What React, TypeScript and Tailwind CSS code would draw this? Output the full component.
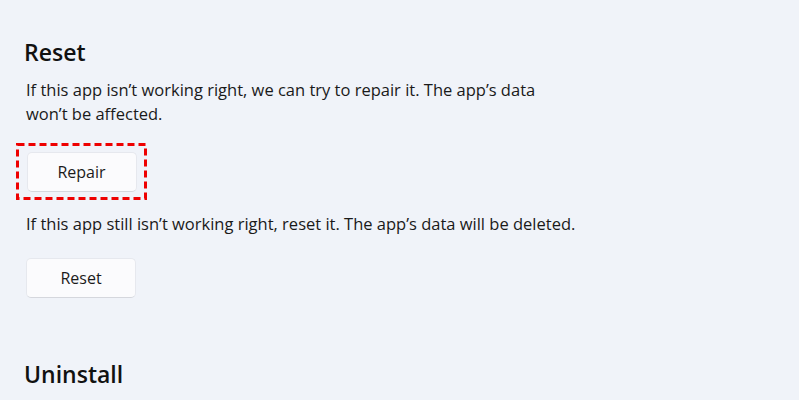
import React from 'react'

const Btn = ({ label }: { label: string }) => (
  <button className="w-[110px] h-[40px] rounded-[5px] bg-[#fbfbfd] border border-[#e6e8ee] border-b-[#d5d7dd] text-[16px] text-[#1b1b1b]">
    {label}
  </button>
)

export default function App() {
  return (
    <div className="w-[799px] h-[400px] overflow-hidden bg-[#f0f3f9] pl-[24px] pt-[38px] font-['Open_Sans',sans-serif] text-[#1a1a1a]">
      <h2 className="text-[23px] font-semibold leading-[28px] text-[#111]">Reset</h2>
      <p className="mt-[12px] text-[16.5px] leading-[24px] w-[545px] pl-[2px]">
        If this app isn’t working right, we can try to repair it. The app’s data won’t be affected.
      </p>
      <div className="relative mt-[17px] -ml-[8px] w-[131px] h-[57px] flex items-center justify-center">
        <Btn label="Repair" />
        {/* red annotation outline */}
        <svg className="absolute inset-0 pointer-events-none" width="131" height="57">
          <rect x="1.5" y="1.5" width="128" height="54" fill="none" stroke="#ee0000" strokeWidth="3" strokeDasharray="7 4" />
        </svg>
      </div>
      <p className="mt-[12px] text-[16.5px] leading-[24px] pl-[2px]">
        If this app still isn’t working right, reset it. The app’s data will be deleted.
      </p>
      <div className="mt-[22px] pl-[2px]">
        <Btn label="Reset" />
      </div>
      <h2 className="mt-[62px] text-[23px] font-semibold leading-[28px] text-[#111]">Uninstall</h2>
    </div>
  )
}
